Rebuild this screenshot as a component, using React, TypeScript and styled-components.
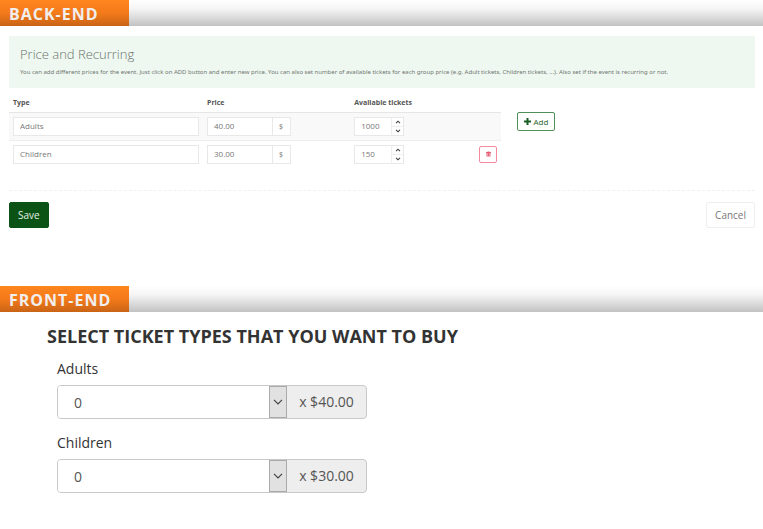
import React, { useState } from "react";
import styled, { createGlobalStyle } from "styled-components";

const GlobalStyle = createGlobalStyle`
  *, *::before, *::after { box-sizing: border-box; }
  body {
    margin: 0;
    background: #fff;
    color: #333;
    font-family: "Open Sans", "Noto Sans", sans-serif;
  }
  button, input, select { font: inherit; margin: 0; }
`;

const SectionBar = styled.header`
  display: flex;
  height: 26px;
  background: linear-gradient(#fff 0%, #f4f4f4 35%, #c2c2c2 100%);
`;

const SectionTitle = styled.h2`
  margin: 0;
  width: 129px;
  padding-left: 9px;
  background: linear-gradient(#ff851f 0%, #f47a1a 50%, #c96416 100%);
  color: #f1eeee;
  font-size: 16px;
  line-height: 28px;
  font-weight: 700;
  letter-spacing: 1px;
  white-space: nowrap;
`;

const AdminPanel = styled.form`
  padding: 10px 8px 58px 9px;
`;

const Notice = styled.div`
  padding: 8px 11px 10px;
  min-height: 52px;
  background: #eef8f0;
`;

const NoticeTitle = styled.h3`
  margin: 0;
  color: #6c726e;
  font-size: 13px;
  line-height: 20px;
  font-weight: 300;
`;

const NoticeText = styled.p`
  margin: 2px 0 0;
  color: #707572;
  font-family: "Noto Sans", "Open Sans", sans-serif;
  font-size: 6px;
  line-height: 12px;
`;

const PriceArea = styled.div`
  display: flex;
  align-items: flex-start;
  gap: 16px;
  padding: 6px 0 21px;
  border-bottom: 1px dashed #f1f1f1;
`;

const PriceTable = styled.table`
  width: 66%;
  border-collapse: collapse;
  table-layout: fixed;
`;

const HeadCell = styled.th<{ $width: string }>`
  width: ${(p) => p.$width};
  height: 18px;
  padding: 1px 4px 0;
  border-bottom: 1px solid #e6e6e6;
  color: #555;
  font-size: 7px;
  line-height: 16px;
  font-weight: 700;
  text-align: left;
`;

const PriceRow = styled.tr<{ $shaded: boolean }>`
  background: ${(p) => (p.$shaded ? "#f9f9f9" : "transparent")};
  border-bottom: 1px solid ${(p) => (p.$shaded ? "#eee" : "transparent")};
`;

const Cell = styled.td<{ $align?: string }>`
  height: 27px;
  padding: 4px;
  text-align: ${(p) => p.$align ?? "left"};
  vertical-align: middle;
`;

const FieldGroup = styled.div<{ $width: string }>`
  display: flex;
  width: ${(p) => p.$width};
  height: 19px;
  border: 1px solid #e8e8e8;
  background: #fff;
`;

const Field = styled.input`
  flex: 1;
  min-width: 0;
  padding: 0 6px;
  border: 0;
  background: transparent;
  color: #777;
  font-size: 8px;
  line-height: 16px;
  outline-color: #0b5314;
`;

const Unit = styled.span`
  width: 18px;
  border-left: 1px solid #e8e8e8;
  color: #777;
  font-size: 7px;
  line-height: 17px;
  text-align: center;
`;

const Stepper = styled.span`
  display: flex;
  flex-direction: column;
  width: 12px;
  border-left: 1px solid #eee;
`;

const StepButton = styled.button`
  display: flex;
  flex: 1;
  align-items: center;
  justify-content: center;
  padding: 0;
  border: 0;
  background: transparent;
  color: #444;
  & + & { border-top: 1px solid #eee; }
`;

const AddButton = styled.button`
  display: inline-flex;
  align-items: center;
  justify-content: center;
  gap: 2px;
  width: 38px;
  height: 19px;
  margin-top: 18px;
  padding: 0;
  border: 1px solid #4f8f58;
  border-radius: 2px;
  background: #fff;
  color: #1b5e25;
  font-size: 8px;
`;

const DeleteButton = styled.button`
  display: flex;
  align-items: center;
  justify-content: center;
  width: 18px;
  height: 17px;
  margin-left: auto;
  padding: 0;
  border: 1px solid #f58a9f;
  border-radius: 2px;
  background: #fff;
  color: #e9607a;
`;

const Actions = styled.div`
  display: flex;
  justify-content: space-between;
  padding-top: 11px;
`;

const ActionButton = styled.button<{ $primary?: boolean }>`
  height: 26px;
  padding: 0 8px;
  border: 1px solid ${(p) => (p.$primary ? "#0b5314" : "#eee")};
  border-radius: 2px;
  background: ${(p) => (p.$primary ? "#0b5314" : "#fff")};
  color: ${(p) => (p.$primary ? "#e6efe7" : "#777")};
  font-size: 10px;
  line-height: 24px;
`;

const TicketForm = styled.form`
  padding: 11px 47px 36px;
`;

const TicketHeading = styled.h1`
  margin: 0;
  color: #333;
  font-size: 18px;
  line-height: 27px;
  font-weight: 700;
`;

const TicketList = styled.div`
  display: flex;
  flex-direction: column;
  gap: 11px;
  padding: 6px 10px 0;
`;

const TicketLabel = styled.label`
  display: block;
  padding-bottom: 3px;
  color: #333;
  font-size: 14px;
  line-height: 26px;
`;

const TicketControl = styled.div`
  display: flex;
  max-width: 310px;
  height: 34px;
  border: 1px solid #c8c8c8;
  border-radius: 4px;
  background: #eee;
  overflow: hidden;
`;

const SelectWrap = styled.div`
  display: grid;
  grid-template-columns: 1fr 18px;
  flex: 1;
`;

const TicketSelect = styled.select`
  grid-area: 1 / 1 / 2 / 3;
  appearance: none;
  min-width: 0;
  padding: 2px 16px 0;
  border: 0;
  border-radius: 0;
  background: #fff;
  color: #555;
  font-size: 14px;
`;

const SelectArrow = styled.span`
  display: flex;
  grid-area: 1 / 2 / 2 / 3;
  align-items: center;
  justify-content: center;
  border: 1px solid #aaa;
  background: #e1e1e1;
  color: #444;
  pointer-events: none;
`;

const TicketPrice = styled.span`
  width: 79px;
  color: #555;
  font-size: 14px;
  line-height: 32px;
  text-align: center;
`;

const ChevronIcon = ({ up = false }: { up?: boolean }) => (
  <svg width="6" height="4" viewBox="0 0 6 4" fill="none" stroke="currentColor" strokeWidth="1.1">
    <path d={up ? "M1 3.2 3 1.2 5 3.2" : "M1 .8 3 2.8 5 .8"} />
  </svg>
);

const PlusIcon = () => (
  <svg width="7" height="7" viewBox="0 0 7 7" fill="none" stroke="currentColor" strokeWidth="2">
    <path d="M3.5 0v7M0 3.5h7" />
  </svg>
);

const TrashIcon = () => (
  <svg width="5" height="6" viewBox="0 0 6 7" fill="currentColor">
    <path d="M2 .5h2l.3.7H6v1H0v-1h1.7z" />
    <path fillRule="evenodd" d="M.6 2h4.8v4.5H.6zM1.8 3v2.6h.5V3zm1.9 0v2.6h.5V3z" />
  </svg>
);

const DropIcon = () => (
  <svg width="10" height="6" viewBox="0 0 10 6" fill="none" stroke="currentColor" strokeWidth="1.2">
    <path d="M1 .8 5 4.8 9 .8" />
  </svg>
);

const initialPrices = [
  { type: "Adults", price: "40.00", available: 1000 },
  { type: "Children", price: "30.00", available: 150 },
];

export default function App() {
  const [prices, setPrices] = useState(initialPrices);

  const update = (index: number, change: Partial<(typeof initialPrices)[number]>) =>
    setPrices((rows) => rows.map((row, i) => (i === index ? { ...row, ...change } : row)));

  return (
    <>
      <GlobalStyle />
      <section>
        <SectionBar>
          <SectionTitle>BACK-END</SectionTitle>
        </SectionBar>
        <AdminPanel onSubmit={(e) => e.preventDefault()}>
          <Notice>
            <NoticeTitle>Price and Recurring</NoticeTitle>
            <NoticeText>
              You can add different prices for the event. Just click on ADD button and enter new price. You can
              also set number of available tickets for each group price (e.g. Adult tickets, Children tickets,
              ...). Also set if the event is recurring or not.
            </NoticeText>
          </Notice>
          <PriceArea>
            <PriceTable>
              <thead>
                <tr>
                  <HeadCell $width="39.4%">Type</HeadCell>
                  <HeadCell $width="29.9%">Price</HeadCell>
                  <HeadCell $width="20%">Available tickets</HeadCell>
                  <HeadCell $width="10.7%" aria-label="Actions" />
                </tr>
              </thead>
              <tbody>
                {prices.map((row, i) => (
                  <PriceRow key={i} $shaded={i % 2 === 0}>
                    <Cell>
                      <FieldGroup $width="100%">
                        <Field
                          aria-label="Type"
                          value={row.type}
                          onChange={(e) => update(i, { type: e.target.value })}
                        />
                      </FieldGroup>
                    </Cell>
                    <Cell>
                      <FieldGroup $width="60%">
                        <Field
                          aria-label="Price"
                          value={row.price}
                          onChange={(e) => update(i, { price: e.target.value })}
                        />
                        <Unit>$</Unit>
                      </FieldGroup>
                    </Cell>
                    <Cell>
                      <FieldGroup $width="50px">
                        <Field
                          aria-label="Available tickets"
                          inputMode="numeric"
                          value={row.available}
                          onChange={(e) => update(i, { available: Number(e.target.value) || 0 })}
                        />
                        <Stepper>
                          <StepButton
                            type="button"
                            aria-label="Increase"
                            onClick={() => update(i, { available: row.available + 1 })}
                          >
                            <ChevronIcon up />
                          </StepButton>
                          <StepButton
                            type="button"
                            aria-label="Decrease"
                            onClick={() => update(i, { available: Math.max(0, row.available - 1) })}
                          >
                            <ChevronIcon />
                          </StepButton>
                        </Stepper>
                      </FieldGroup>
                    </Cell>
                    <Cell $align="right">
                      {i > 0 && (
                        <DeleteButton
                          type="button"
                          aria-label="Delete"
                          onClick={() => setPrices((rows) => rows.filter((_, n) => n !== i))}
                        >
                          <TrashIcon />
                        </DeleteButton>
                      )}
                    </Cell>
                  </PriceRow>
                ))}
              </tbody>
            </PriceTable>
            <AddButton
              type="button"
              onClick={() => setPrices((rows) => [...rows, { type: "", price: "0.00", available: 0 }])}
            >
              <PlusIcon />
              Add
            </AddButton>
          </PriceArea>
          <Actions>
            <ActionButton type="submit" $primary>
              Save
            </ActionButton>
            <ActionButton type="button">Cancel</ActionButton>
          </Actions>
        </AdminPanel>
      </section>
      <section>
        <SectionBar>
          <SectionTitle>FRONT-END</SectionTitle>
        </SectionBar>
        <TicketForm>
          <TicketHeading>SELECT TICKET TYPES THAT YOU WANT TO BUY</TicketHeading>
          <TicketList>
            {initialPrices.map((ticket) => (
              <div key={ticket.type}>
                <TicketLabel htmlFor={`qty-${ticket.type}`}>{ticket.type}</TicketLabel>
                <TicketControl>
                  <SelectWrap>
                    <TicketSelect id={`qty-${ticket.type}`} defaultValue="0">
                      {[0, 1, 2, 3, 4, 5].map((n) => (
                        <option key={n}>{n}</option>
                      ))}
                    </TicketSelect>
                    <SelectArrow>
                      <DropIcon />
                    </SelectArrow>
                  </SelectWrap>
                  <TicketPrice>x ${ticket.price}</TicketPrice>
                </TicketControl>
              </div>
            ))}
          </TicketList>
        </TicketForm>
      </section>
    </>
  );
}
